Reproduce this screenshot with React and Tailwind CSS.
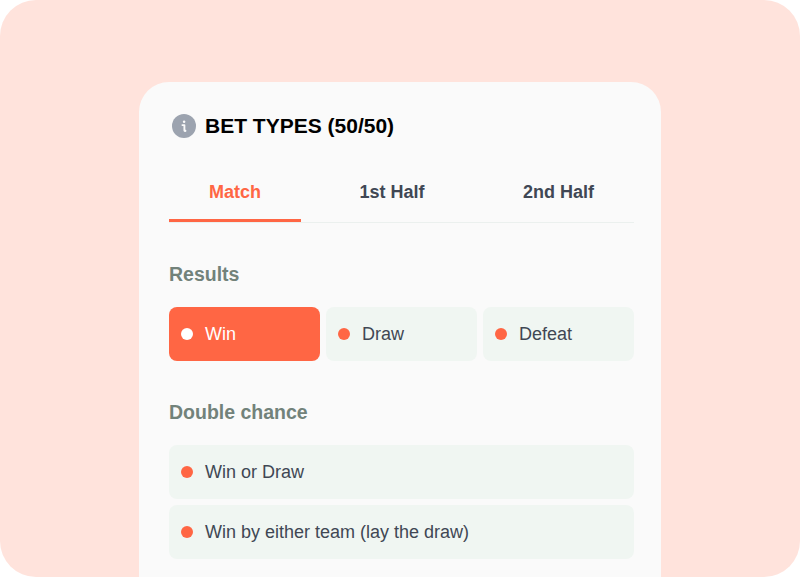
import { useState } from 'react'

const TABS = ['Match', '1st Half', '2nd Half']

const RESULTS = ['Win', 'Draw', 'Defeat']

const DOUBLE_CHANCE = ['Win or Draw', 'Win by either team (lay the draw)']

function InfoIcon() {
  return (
    <svg width="24" height="24" viewBox="0 0 24 24" className="block shrink-0">
      <circle cx="12" cy="12" r="12" fill="#9ca3af" />
      <circle cx="12.1" cy="7.7" r="1.25" fill="#fafafa" />
      <path
        d="M10.4 11.1h2v5.2c0 .7.4.8 1.1.5"
        fill="none"
        stroke="#fafafa"
        strokeWidth="1.9"
        strokeLinecap="round"
        strokeLinejoin="round"
      />
    </svg>
  )
}

function Tabs({ active, onChange }) {
  return (
    <div className="mt-[22px] flex h-[60px] justify-between border-b border-[#ebf0ee]">
      {TABS.map(tab => (
        <button
          key={tab}
          onClick={() => onChange(tab)}
          className={`h-[59px] border-b-3 px-10 pt-[3px] text-[18px] leading-[27px] font-bold ${
            active === tab ? 'border-[#ff6644] text-[#ff6644]' : 'border-transparent text-[#404754]'
          }`}
        >
          {tab}
        </button>
      ))}
    </div>
  )
}

function Option({ label, selected, onSelect }) {
  return (
    <button
      onClick={onSelect}
      className={`flex h-[54px] items-center gap-3 rounded-lg px-3 text-left text-[18px] ${
        selected ? 'bg-[#ff6644] text-white' : 'bg-[#f0f6f2] text-[#404754]'
      }`}
    >
      <span className={`size-3 shrink-0 rounded-full ${selected ? 'bg-white' : 'bg-[#ff6644]'}`}></span>
      {label}
    </button>
  )
}

function Section({ title, className, children }) {
  return (
    <section>
      <h2 className="mb-[18px] text-[19.5px] leading-[30px] font-bold text-[#72827a]">{title}</h2>
      <div className={className}>{children}</div>
    </section>
  )
}

function App() {
  const [tab, setTab] = useState('Match')
  const [bet, setBet] = useState('Win')

  const renderOption = label => (
    <Option key={label} label={label} selected={bet === label} onSelect={() => setBet(label)} />
  )

  return (
    <div className="h-[577px] overflow-hidden bg-white font-['Liberation_Sans',Arial,sans-serif]">
      <div className="flex h-full justify-center overflow-hidden rounded-[36px] bg-[#ffe3dc] pt-[82px]">
        <main className="h-[560px] w-[522px] shrink-0 rounded-t-[30px] bg-[#fafafa] pt-[29px] pr-[27px] pl-[30px]">
          <div className="flex h-[30px] items-center gap-[9px] pl-[3px]">
            <InfoIcon />
            <h1 className="text-[21px] leading-[30px] font-bold text-black">BET TYPES (50/50)</h1>
          </div>

          <Tabs active={tab} onChange={setTab} />

          <div className="mt-9 flex flex-col gap-9">
            <Section title="Results" className="grid grid-cols-3 gap-1.5">
              {RESULTS.map(renderOption)}
            </Section>

            <Section title="Double chance" className="grid gap-1.5">
              {DOUBLE_CHANCE.map(renderOption)}
            </Section>
          </div>
        </main>
      </div>
    </div>
  )
}

export default App
